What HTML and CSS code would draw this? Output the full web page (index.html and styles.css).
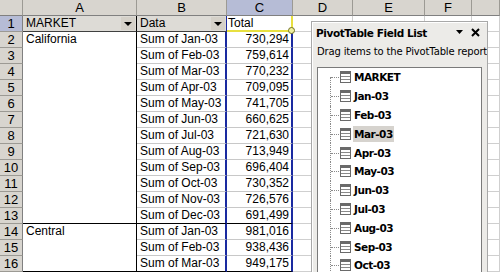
FILE: index.html
```html
<!DOCTYPE html>
<html>
<head>
<meta charset="utf-8">
<link rel="stylesheet" href="styles.css">
</head>
<body>
<div class="sheet">
  <div class="h corner"></div><div class="h">A</div><div class="h">B</div><div class="h sel">C</div><div class="h">D</div><div class="h">E</div><div class="h">F</div><div class="h"></div>

  <div class="r sel">1</div>
  <div class="fh">MARKET<span class="dd"></span></div>
  <div class="fh fhb">Data<span class="dd"></span></div>
  <div class="tot">Total<span class="handle"></span></div>
  <div class="e"></div><div class="e"></div><div class="e"></div><div class="e"></div>

  <div class="r">2</div><div class="a">California</div><div class="b">Sum of Jan-03</div><div class="n">730,294</div><div class="e"></div><div class="e"></div><div class="e"></div><div class="e"></div>
  <div class="r">3</div><div class="a"></div><div class="b">Sum of Feb-03</div><div class="n">759,614</div><div class="e"></div><div class="e"></div><div class="e"></div><div class="e"></div>
  <div class="r">4</div><div class="a"></div><div class="b">Sum of Mar-03</div><div class="n">770,232</div><div class="e"></div><div class="e"></div><div class="e"></div><div class="e"></div>
  <div class="r">5</div><div class="a"></div><div class="b">Sum of Apr-03</div><div class="n">709,095</div><div class="e"></div><div class="e"></div><div class="e"></div><div class="e"></div>
  <div class="r">6</div><div class="a"></div><div class="b">Sum of May-03</div><div class="n">741,705</div><div class="e"></div><div class="e"></div><div class="e"></div><div class="e"></div>
  <div class="r">7</div><div class="a"></div><div class="b">Sum of Jun-03</div><div class="n">660,625</div><div class="e"></div><div class="e"></div><div class="e"></div><div class="e"></div>
  <div class="r">8</div><div class="a"></div><div class="b">Sum of Jul-03</div><div class="n">721,630</div><div class="e"></div><div class="e"></div><div class="e"></div><div class="e"></div>
  <div class="r">9</div><div class="a"></div><div class="b">Sum of Aug-03</div><div class="n">713,949</div><div class="e"></div><div class="e"></div><div class="e"></div><div class="e"></div>
  <div class="r">10</div><div class="a"></div><div class="b">Sum of Sep-03</div><div class="n">696,404</div><div class="e"></div><div class="e"></div><div class="e"></div><div class="e"></div>
  <div class="r">11</div><div class="a"></div><div class="b">Sum of Oct-03</div><div class="n">730,352</div><div class="e"></div><div class="e"></div><div class="e"></div><div class="e"></div>
  <div class="r">12</div><div class="a"></div><div class="b">Sum of Nov-03</div><div class="n">726,576</div><div class="e"></div><div class="e"></div><div class="e"></div><div class="e"></div>
  <div class="r">13</div><div class="a end"></div><div class="b end">Sum of Dec-03</div><div class="n end">691,499</div><div class="e"></div><div class="e"></div><div class="e"></div><div class="e"></div>
  <div class="r">14</div><div class="a">Central</div><div class="b">Sum of Jan-03</div><div class="n">981,016</div><div class="e"></div><div class="e"></div><div class="e"></div><div class="e"></div>
  <div class="r">15</div><div class="a"></div><div class="b">Sum of Feb-03</div><div class="n">938,436</div><div class="e"></div><div class="e"></div><div class="e"></div><div class="e"></div>
  <div class="r">16</div><div class="a end"></div><div class="b end">Sum of Mar-03</div><div class="n end">949,175</div><div class="e"></div><div class="e"></div><div class="e"></div><div class="e"></div>
</div>

<div class="panel">
  <div class="ptitle">
    <span class="ptext">PivotTable Field List</span>
    <span class="pbtns">
      <svg width="8" height="5" viewBox="0 0 8 5"><path d="M0 0h7L3.5 4z" fill="#000"/></svg>
      <svg width="9" height="9" viewBox="0 0 9 9"><path d="M1 1l7 7M8 1l-7 7" stroke="#000" stroke-width="2"/></svg>
    </span>
  </div>
  <div class="phint">Drag items to the PivotTable report</div>
  <div class="plist">
    <ul class="tree">
      <li><svg class="ic" width="11" height="12" viewBox="0 0 11 12"><rect x="0.5" y="0.5" width="10" height="11" fill="#fff" stroke="#6a6a6a"/><rect x="0" y="0" width="11" height="3" fill="#6a6a6a"/><path d="M1 5.5h9M1 8.5h9" stroke="#8a8a8a"/></svg><span>MARKET</span></li>
      <li><svg class="ic" width="11" height="12" viewBox="0 0 11 12"><rect x="0.5" y="0.5" width="10" height="11" fill="#fff" stroke="#6a6a6a"/><rect x="0" y="0" width="11" height="3" fill="#6a6a6a"/><path d="M1 5.5h9M1 8.5h9" stroke="#8a8a8a"/></svg><span>Jan-03</span></li>
      <li><svg class="ic" width="11" height="12" viewBox="0 0 11 12"><rect x="0.5" y="0.5" width="10" height="11" fill="#fff" stroke="#6a6a6a"/><rect x="0" y="0" width="11" height="3" fill="#6a6a6a"/><path d="M1 5.5h9M1 8.5h9" stroke="#8a8a8a"/></svg><span>Feb-03</span></li>
      <li><svg class="ic" width="11" height="12" viewBox="0 0 11 12"><rect x="0.5" y="0.5" width="10" height="11" fill="#fff" stroke="#6a6a6a"/><rect x="0" y="0" width="11" height="3" fill="#6a6a6a"/><path d="M1 5.5h9M1 8.5h9" stroke="#8a8a8a"/></svg><span class="hl">Mar-03</span></li>
      <li><svg class="ic" width="11" height="12" viewBox="0 0 11 12"><rect x="0.5" y="0.5" width="10" height="11" fill="#fff" stroke="#6a6a6a"/><rect x="0" y="0" width="11" height="3" fill="#6a6a6a"/><path d="M1 5.5h9M1 8.5h9" stroke="#8a8a8a"/></svg><span>Apr-03</span></li>
      <li><svg class="ic" width="11" height="12" viewBox="0 0 11 12"><rect x="0.5" y="0.5" width="10" height="11" fill="#fff" stroke="#6a6a6a"/><rect x="0" y="0" width="11" height="3" fill="#6a6a6a"/><path d="M1 5.5h9M1 8.5h9" stroke="#8a8a8a"/></svg><span>May-03</span></li>
      <li><svg class="ic" width="11" height="12" viewBox="0 0 11 12"><rect x="0.5" y="0.5" width="10" height="11" fill="#fff" stroke="#6a6a6a"/><rect x="0" y="0" width="11" height="3" fill="#6a6a6a"/><path d="M1 5.5h9M1 8.5h9" stroke="#8a8a8a"/></svg><span>Jun-03</span></li>
      <li><svg class="ic" width="11" height="12" viewBox="0 0 11 12"><rect x="0.5" y="0.5" width="10" height="11" fill="#fff" stroke="#6a6a6a"/><rect x="0" y="0" width="11" height="3" fill="#6a6a6a"/><path d="M1 5.5h9M1 8.5h9" stroke="#8a8a8a"/></svg><span>Jul-03</span></li>
      <li><svg class="ic" width="11" height="12" viewBox="0 0 11 12"><rect x="0.5" y="0.5" width="10" height="11" fill="#fff" stroke="#6a6a6a"/><rect x="0" y="0" width="11" height="3" fill="#6a6a6a"/><path d="M1 5.5h9M1 8.5h9" stroke="#8a8a8a"/></svg><span>Aug-03</span></li>
      <li><svg class="ic" width="11" height="12" viewBox="0 0 11 12"><rect x="0.5" y="0.5" width="10" height="11" fill="#fff" stroke="#6a6a6a"/><rect x="0" y="0" width="11" height="3" fill="#6a6a6a"/><path d="M1 5.5h9M1 8.5h9" stroke="#8a8a8a"/></svg><span>Sep-03</span></li>
      <li><svg class="ic" width="11" height="12" viewBox="0 0 11 12"><rect x="0.5" y="0.5" width="10" height="11" fill="#fff" stroke="#6a6a6a"/><rect x="0" y="0" width="11" height="3" fill="#6a6a6a"/><path d="M1 5.5h9M1 8.5h9" stroke="#8a8a8a"/></svg><span>Oct-03</span></li>
    </ul>
  </div>
</div>
</body>
</html>
```

FILE: styles.css
```css
html, body {
  margin: 0;
  padding: 0;
  width: 500px;
  height: 272px;
  overflow: hidden;
  background: #fff;
}
body {
  position: relative;
  font-family: "Liberation Sans", Arial, sans-serif;
  font-size: 12px;
  color: #000;
}
.sheet {
  display: grid;
  grid-template-columns: 23px 114px 90px 66px 60px 72px 47px 28px;
  grid-auto-rows: 16px;
}
.sheet > div {
  box-sizing: border-box;
  line-height: 15px;
  white-space: nowrap;
  overflow: hidden;
}
.h {
  background: #d8d5cf;
  border-right: 1px solid #9c9a94;
  border-bottom: 1px solid #808080;
  text-align: center;
  font-size: 13px;
}
.h.sel { background: #b6bcd6; }
.r {
  background: #d8d5cf;
  border-right: 1px solid #808080;
  border-bottom: 1px solid #9c9a94;
  text-align: center;
  font-size: 13px;
}
.r.sel { background: #b6bcd6; }
.fh {
  position: relative;
  background: #dddbd6;
  border-right: 1px solid #000;
  border-bottom: 1px solid #404040;
  padding-left: 3px;
}
.fhb { border-right: 1px solid #1a2aa0; }
.dd {
  position: absolute;
  right: 1px;
  top: 1px;
  width: 14px;
  height: 13px;
  box-sizing: border-box;
  background: #d4d0c8;
}
.dd::after {
  content: "";
  position: absolute;
  left: 3px;
  top: 5px;
  border-left: 4px solid transparent;
  border-right: 4px solid transparent;
  border-top: 4px solid #000;
}
.tot {
  position: relative;
  overflow: visible !important;
  padding-left: 1px;
  border-right: 2px solid #e8e040;
  border-bottom: 2px solid #e8e040;
}
.handle {
  position: absolute;
  right: -4px;
  bottom: -4px;
  width: 5px;
  height: 5px;
  border-radius: 50%;
  border: 1px solid #707020;
  background: #f0f0a0;
  z-index: 2;
}
.a {
  border-right: 1px solid #000;
  padding-left: 3px;
}
.b {
  border-right: 2px solid #1a2aa0;
  border-bottom: 1px solid #c8c8c8;
  padding-left: 3px;
}
.n {
  border-right: 2px solid #1a2aa0;
  border-bottom: 1px solid #c8c8c8;
  text-align: right;
  padding-right: 2px;
}
.a.end, .b.end, .n.end { border-bottom: 1px solid #000; }
.e {
  border-right: 1px solid #cfcfcf;
  border-bottom: 1px solid #cfcfcf;
}

.panel {
  position: absolute;
  left: 311px;
  top: 21px;
  width: 177px;
  height: 251px;
  overflow: hidden;
  box-sizing: border-box;
  background: #ecebe8;
  border: 1px solid #a8a8a8;
  border-bottom: none;
  box-shadow: inset 1px 1px 0 #fff;
  font-family: "DejaVu Sans", sans-serif;
  font-size: 10px;
}
.ptitle {
  display: flex;
  align-items: center;
  justify-content: space-between;
  height: 19px;
  padding: 1px 7px 0 4px;
}
.ptext {
  font-weight: bold;
  font-size: 10.5px;
  letter-spacing: -0.4px;
}
.pbtns {
  display: flex;
  align-items: center;
  gap: 7px;
}
.phint {
  padding: 4px 0 0 5px;
  height: 19px;
  box-sizing: border-box;
  white-space: nowrap;
  letter-spacing: -0.15px;
}
.plist {
  margin: 6px 5px 0 5px;
  height: 240px;
  background: #fff;
  border: 1px solid #7a7a7a;
  box-sizing: border-box;
}
.tree {
  list-style: none;
  margin: 0;
  padding: 0 0 0 12px;
}
.tree li {
  position: relative;
  height: 18.8px;
  display: flex;
  align-items: center;
  padding-left: 10px;
  font-weight: bold;
  font-size: 10.5px;
  letter-spacing: -0.5px;
}
.tree li::before {
  content: "";
  position: absolute;
  left: 0;
  top: 0;
  bottom: 0;
  border-left: 1px dotted #8a8a8a;
}
.tree li:first-child::before { top: 50%; }
.tree li::after {
  content: "";
  position: absolute;
  left: 1px;
  top: 50%;
  width: 8px;
  border-top: 1px dotted #8a8a8a;
}
.ic { flex: none; margin-right: 2px; }
.tree span { padding: 2px 1px; }
.tree .hl { background: #d6d3ce; }
```
